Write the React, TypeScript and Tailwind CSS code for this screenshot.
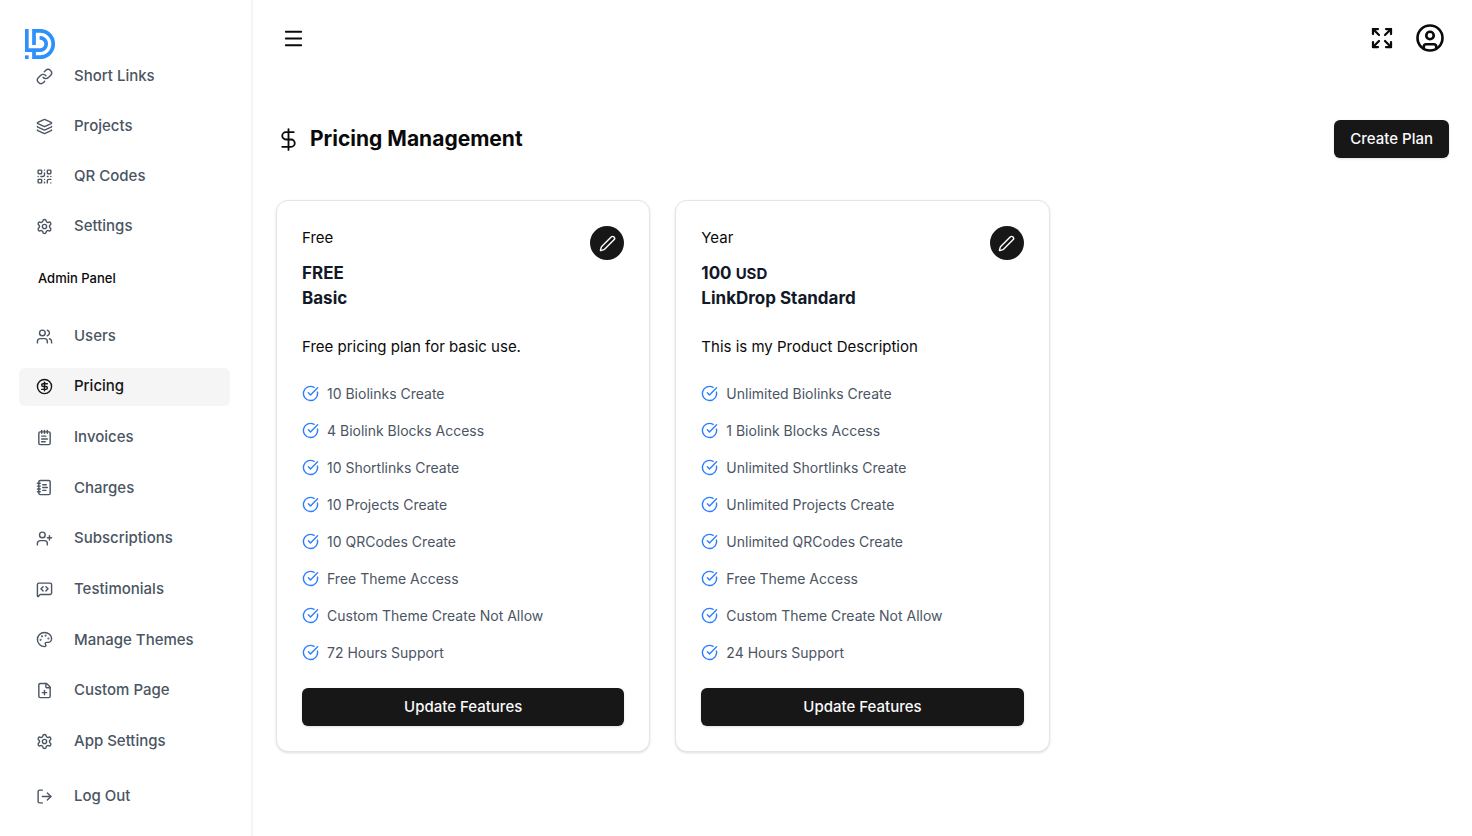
import type { ReactNode } from "react";
import {
  CircleCheckBig,
  CircleDollarSign,
  CircleUser,
  DollarSign,
  Expand,
  FilePlus,
  Layers,
  Link,
  LogOut,
  Menu,
  MessageSquareCode,
  NotebookText,
  NotepadText,
  Palette,
  Pen,
  QrCode,
  Settings,
  UserPlus,
  Users,
  type LucideIcon,
} from "lucide-react";

type NavEntry = { label: string; icon: LucideIcon; active?: boolean };

const mainNav: NavEntry[] = [
  { label: "Short Links", icon: Link },
  { label: "Projects", icon: Layers },
  { label: "QR Codes", icon: QrCode },
  { label: "Settings", icon: Settings },
];

const adminNav: NavEntry[] = [
  { label: "Users", icon: Users },
  { label: "Pricing", icon: CircleDollarSign, active: true },
  { label: "Invoices", icon: NotepadText },
  { label: "Charges", icon: NotebookText },
  { label: "Subscriptions", icon: UserPlus },
  { label: "Testimonials", icon: MessageSquareCode },
  { label: "Manage Themes", icon: Palette },
  { label: "Custom Page", icon: FilePlus },
  { label: "App Settings", icon: Settings },
];

type Plan = {
  period: string;
  price: ReactNode;
  name: string;
  description: string;
  features: string[];
};

const plans: Plan[] = [
  {
    period: "Free",
    price: "FREE",
    name: "Basic",
    description: "Free pricing plan for basic use.",
    features: [
      "10 Biolinks Create",
      "4 Biolink Blocks Access",
      "10 Shortlinks Create",
      "10 Projects Create",
      "10 QRCodes Create",
      "Free Theme Access",
      "Custom Theme Create Not Allow",
      "72 Hours Support",
    ],
  },
  {
    period: "Year",
    price: (
      <>
        100 <span className="text-[15px]">USD</span>
      </>
    ),
    name: "LinkDrop Standard",
    description: "This is my Product Description",
    features: [
      "Unlimited Biolinks Create",
      "1 Biolink Blocks Access",
      "Unlimited Shortlinks Create",
      "Unlimited Projects Create",
      "Unlimited QRCodes Create",
      "Free Theme Access",
      "Custom Theme Create Not Allow",
      "24 Hours Support",
    ],
  },
];

function Logo() {
  return (
    <svg viewBox="0 0 30 30" className="size-[30px]" fill="none" stroke="#2e90fa" strokeWidth="3.7" role="img" aria-label="LinkDrop">
      <path d="M1.8 0v21.2H15a6.2 6.2 0 0 0 0-12.4h-.4" />
      <path d="M9 16V1.8h6a13.2 13.2 0 0 1 0 26.4H9V23" />
      <path d="M0 28.2h3.6" />
    </svg>
  );
}

function NavItem({ label, icon: Icon, active }: NavEntry) {
  return (
    <li>
      <a
        href="#"
        aria-current={active ? "page" : undefined}
        className={
          active
            ? "flex h-[38px] items-center gap-[21px] rounded-md bg-neutral-100 px-[17px] text-[15px] font-medium text-neutral-900"
            : "flex h-[38px] items-center gap-[21px] rounded-md px-[17px] text-[15px] font-medium text-[#4b5563]"
        }
      >
        <Icon className="size-[17px]" strokeWidth={2} />
        <span>{label}</span>
      </a>
    </li>
  );
}

function PlanCard({ plan }: { plan: Plan }) {
  return (
    <article className="rounded-xl border border-neutral-200 bg-white p-[25px] shadow">
      <div className="flex items-start justify-between">
        <div className="text-[17px] leading-[25px] font-bold text-[#111827]">
          <p className="mb-[11px] text-[15px] leading-6 font-normal text-neutral-950">{plan.period}</p>
          <p>{plan.price}</p>
          <h2>{plan.name}</h2>
        </div>
        <button
          type="button"
          aria-label={`Edit ${plan.name}`}
          className="grid size-[34px] place-items-center rounded-full bg-neutral-900 text-white"
        >
          <Pen className="size-[17px]" strokeWidth={2} />
        </button>
      </div>
      <p className="mt-6 text-[15px] leading-6 text-neutral-950">{plan.description}</p>
      <ul className="mt-6 flex flex-col gap-4">
        {plan.features.map((feature) => (
          <li key={feature} className="flex items-center gap-2 text-[14px] leading-[21px] text-[#4b5563]">
            <CircleCheckBig className="size-[17px] text-blue-500" />
            <span>{feature}</span>
          </li>
        ))}
      </ul>
      <button
        type="button"
        className="mt-[25px] h-[38px] w-full rounded-md bg-neutral-900 text-[15px] font-medium text-neutral-50 shadow"
      >
        Update Features
      </button>
    </article>
  );
}

export default function App() {
  return (
    <div className="flex min-h-screen bg-white font-['Inter',sans-serif] text-neutral-950">
      <aside className="flex w-[253px] shrink-0 flex-col border-r-2 border-neutral-100 pr-[21px] pb-[21px] pl-[19px]">
        <div className="px-[6px] pt-[29px]">
          <Logo />
        </div>
        <nav aria-label="Main" className="-mt-[2px]">
          <ul className="flex flex-col gap-[12px]">
            {mainNav.map((item) => (
              <NavItem key={item.label} {...item} />
            ))}
          </ul>
        </nav>
        <h2 className="mt-[23px] mb-[29px] px-[19px] text-[13px] leading-5 font-medium">Admin Panel</h2>
        <nav aria-label="Admin" className="flex flex-1 flex-col">
          <ul className="flex flex-1 flex-col justify-between">
            {adminNav.map((item) => (
              <NavItem key={item.label} {...item} />
            ))}
          </ul>
          <ul className="mt-[17px]">
            <NavItem label="Log Out" icon={LogOut} />
          </ul>
        </nav>
      </aside>

      <div className="min-w-0 flex-1 px-[23px]">
        <header className="flex h-[76px] items-center justify-between pr-[4px] pl-[6px]">
          <button type="button" aria-label="Toggle sidebar">
            <Menu className="size-[23px]" />
          </button>
          <div className="flex items-center gap-[21px]">
            <button type="button" aria-label="Full screen">
              <Expand className="size-6" strokeWidth={2.25} />
            </button>
            <button type="button" aria-label="Account">
              <CircleUser className="size-[30px]" strokeWidth={2.1} />
            </button>
          </div>
        </header>

        <main>
          <div className="mt-[44px] mb-[42px] flex items-center justify-between">
            <h1 className="flex items-center gap-[9px] text-[21px] leading-8 font-bold">
              <DollarSign className="size-[25px]" strokeWidth={1.75} />
              Pricing Management
            </h1>
            <button
              type="button"
              className="h-[38px] rounded-md bg-neutral-900 px-4 text-[15px] font-medium text-neutral-50 shadow"
            >
              Create Plan
            </button>
          </div>
          <div className="grid grid-cols-3 items-start gap-[25px]">
            {plans.map((plan) => (
              <PlanCard key={plan.name} plan={plan} />
            ))}
          </div>
        </main>
      </div>
    </div>
  );
}
